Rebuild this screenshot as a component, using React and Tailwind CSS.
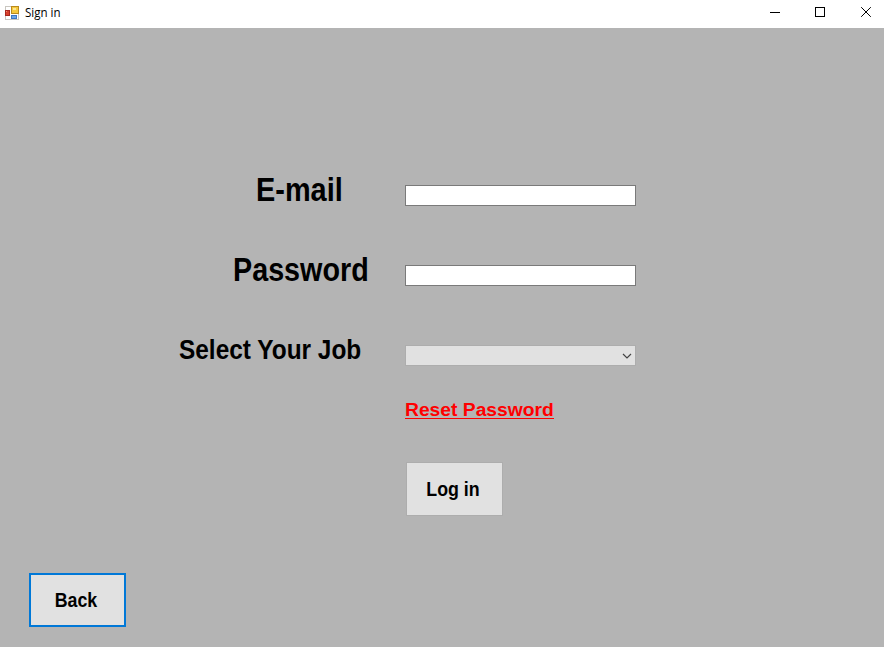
import React from "react";

function AppIcon() {
  return (
    <svg width="14" height="14" viewBox="0 0 14 14" shapeRendering="crispEdges">
      <rect x="0.5" y="0.5" width="13" height="13" fill="#fff" stroke="#c9c6c0" />
      <rect x="6" y="0" width="8" height="8" fill="#b98a1e" />
      <rect x="7" y="1" width="6" height="6" fill="#f6c93c" />
      <rect x="8" y="2" width="3" height="2" fill="#fde794" />
      <rect x="0" y="4" width="5" height="6" fill="#a8281f" />
      <rect x="1" y="5" width="3" height="4" fill="#d8402c" />
      <rect x="1" y="5" width="1" height="1" fill="#f08b76" />
      <rect x="6" y="9" width="6" height="4" fill="#3d76c4" />
      <rect x="7" y="10" width="4" height="2" fill="#6ca5e6" />
    </svg>
  );
}

function TitleBar() {
  return (
    <header className="flex h-[28px] items-start bg-white">
      <div className="flex h-[26px] flex-1 items-center pl-[5px]">
        <div className="-mt-px"><AppIcon /></div>
        <span className="ml-[6px] origin-left scale-x-[0.96] font-['Open_Sans',sans-serif] text-[12px] leading-[16px] font-normal text-black">
          Sign in
        </span>
      </div>
      <svg width="116" height="25" viewBox="0 0 116 25" fill="none" stroke="#000" strokeWidth="1">
        <path d="M2 12.5h10" shapeRendering="crispEdges" />
        <rect x="47.5" y="7.5" width="9" height="9" shapeRendering="crispEdges" />
        <path d="M93.2 7.2l9.6 9.6M102.8 7.2l-9.6 9.6" />
      </svg>
    </header>
  );
}

export default function App() {
  return (
    <div className="flex h-[647px] w-[884px] flex-col overflow-hidden bg-[#b4b4b4] font-['Liberation_Sans',Arial,sans-serif] font-bold text-black">
      <TitleBar />
      <main className="flex flex-1 flex-col">
        <form className="flex flex-col pt-[137px]" onSubmit={(e) => e.preventDefault()}>
          <div className="flex h-[80px] items-start">
            <label htmlFor="email" className="w-[405px] pl-[256px] pt-[4px] text-[34px] leading-[40px] whitespace-nowrap">
              <span className="inline-block origin-left scale-x-[0.85]">E-mail</span>
            </label>
            <input id="email" className="mt-[20px] h-[21px] w-[231px] border border-[#7a7a7a] bg-white outline-none" />
          </div>
          <div className="flex h-[80px] items-start">
            <label htmlFor="password" className="w-[405px] pl-[233px] pt-[4px] text-[34px] leading-[40px] whitespace-nowrap">
              <span className="inline-block origin-left scale-x-[0.845]">Password</span>
            </label>
            <input id="password" type="password" className="mt-[20px] h-[21px] w-[231px] border border-[#7a7a7a] bg-white outline-none" />
          </div>
          <div className="flex h-[72px] items-start">
            <label className="w-[405px] pl-[179px] pt-[9px] text-[28px] leading-[32px] whitespace-nowrap">
              <span className="inline-block origin-left scale-x-[0.872]">Select Your Job</span>
            </label>
            <button type="button" aria-label="Select Your Job" className="mt-[20px] flex h-[21px] w-[231px] items-center justify-end border border-[#adadad] bg-[#e1e1e1] pr-[3px]">
              <svg width="10" height="6" viewBox="0 0 10 6" fill="none" stroke="#444" strokeWidth="1.2">
                <path d="M1 1l4 4 4-4" />
              </svg>
            </button>
          </div>
          <a href="#reset" className="ml-[405px] flex h-[25px] w-[149px] flex-col pt-px text-[18px] leading-[24px] whitespace-nowrap text-[#f00]">
            <span className="h-[20px] origin-left scale-x-[1.07] self-start">Reset Password</span>
            <span className="h-px bg-[#f00]" />
          </a>
          <button type="submit" className="mt-[40px] ml-[406px] h-[54px] w-[97px] border border-[#adadad] bg-[#e1e1e1] pr-[4px] text-[20px]">
            <span className="inline-block scale-x-[0.89]">Log in</span>
          </button>
        </form>
        <button type="button" className="mt-auto mb-[20px] ml-[29px] h-[54px] w-[97px] border-2 border-[#0078d7] bg-[#e1e1e1] pr-[4px] text-[20px]">
          <span className="inline-block scale-x-[0.89]">Back</span>
        </button>
      </main>
    </div>
  );
}
